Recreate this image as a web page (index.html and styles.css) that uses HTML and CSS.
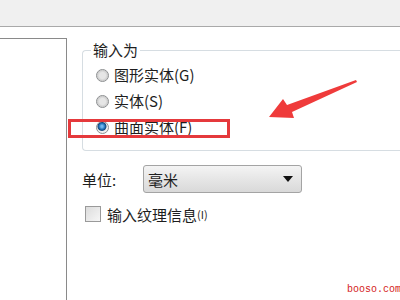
FILE: index.html
```html
<!DOCTYPE html>
<html lang="zh">
<head>
<meta charset="utf-8">
<link rel="stylesheet" href="styles.css">
</head>
<body>
<div class="top"></div>
<div class="main">
  <div class="left"></div>
  <div class="right">
    <fieldset class="group">
      <legend>输入为</legend>
      <div class="opt"><span class="radio"></span>图形实体(G)</div>
      <div class="opt"><span class="radio"></span>实体(S)</div>
      <div class="opt"><span class="radio on"></span>曲面实体(F)</div>
    </fieldset>
    <div class="unit">
      <span class="label">单位:</span>
      <div class="select"><span>毫米</span><span class="caret"></span></div>
    </div>
    <div class="chk"><span class="box"></span>输入纹理信息<span class="key">(I)</span></div>
  </div>
</div>
<div class="highlight"></div>
<svg class="arrow" width="400" height="300" viewBox="0 0 400 300">
  <polygon points="269,117 283,99 287,105 356,80 357,82 292,112 294,118" fill="#ef3b3b"/>
</svg>
<div class="mark">booso.com</div>
</body>
</html>
```
FILE: styles.css
```css
html, body {
  margin: 0;
  padding: 0;
}
body {
  width: 400px;
  height: 300px;
  overflow: hidden;
  position: relative;
  background: #fff;
  font-family: "Noto Sans CJK SC", "Noto Sans", sans-serif;
  font-size: 15px;
  color: #1e1e1e;
}
.top {
  height: 26px;
  background: #f0f0f0;
  border-bottom: 1px solid #a9a9a9;
}
.main {
  display: flex;
  height: 273px;
}
.left {
  width: 66px;
  margin-top: 11px;
  border-top: 1px solid #8a8a8a;
  border-right: 1px solid #8a8a8a;
  flex: none;
}
.right {
  padding-left: 15px;
  padding-top: 13px;
  flex: 1;
  min-width: 0;
}
.group {
  margin: 0;
  padding: 2px 8px 10px 8px;
  border: 1px solid #d6dde2;
  border-right: none;
  border-radius: 4px 0 0 4px;
  min-width: 0;
}
.group legend {
  padding: 0 2px;
  line-height: 20px;
  height: 20px;
}
.opt {
  height: 26px;
  display: flex;
  align-items: center;
  line-height: 26px;
}
.radio {
  width: 11px;
  height: 11px;
  border-radius: 50%;
  border: 1px solid #8c8e90;
  background: radial-gradient(circle at 50% 50%, #e6e6e6 0 3px, #cfcfcf 5px, #f4f4f4 6px);
  margin-left: 5px;
  margin-right: 5px;
  flex: none;
}
.radio.on {
  background: radial-gradient(circle at 45% 40%, #6fb7ee 0 1px, #1f6fb8 3px, #16497a 4px, #f0f0f0 5px);
}
.unit {
  display: flex;
  align-items: center;
  margin-top: 14px;
  height: 28px;
}
.label {
  width: 61px;
  flex: none;
}
.select {
  box-sizing: border-box;
  width: 159px;
  height: 28px;
  border: 1px solid #a4a4a4;
  border-radius: 3px;
  background: linear-gradient(#f4f4f4, #e6e6e6 50%, #d9d9d9);
  display: flex;
  align-items: center;
  justify-content: space-between;
  padding: 0 8px 0 4px;
}
.caret {
  width: 0;
  height: 0;
  border-left: 5px solid transparent;
  border-right: 5px solid transparent;
  border-top: 6px solid #111;
}
.chk {
  display: flex;
  align-items: center;
  margin-top: 13px;
  height: 16px;
}
.box {
  width: 14px;
  height: 14px;
  border: 1px solid #9a9a9a;
  background: linear-gradient(135deg, #dcdcdc, #f6f6f6);
  margin-left: 3px;
  margin-right: 6px;
  flex: none;
}
.key {
  font-size: 11px;
}
.highlight {
  position: absolute;
  left: 68px;
  top: 119px;
  width: 156px;
  height: 13px;
  border: 3px solid #e5393c;
}
.arrow {
  position: absolute;
  left: 0;
  top: 0;
}
.mark {
  position: absolute;
  left: 347px;
  top: 284px;
  font-family: "Liberation Mono", monospace;
  font-size: 10px;
  color: #d41c1c;
  white-space: nowrap;
}
```
